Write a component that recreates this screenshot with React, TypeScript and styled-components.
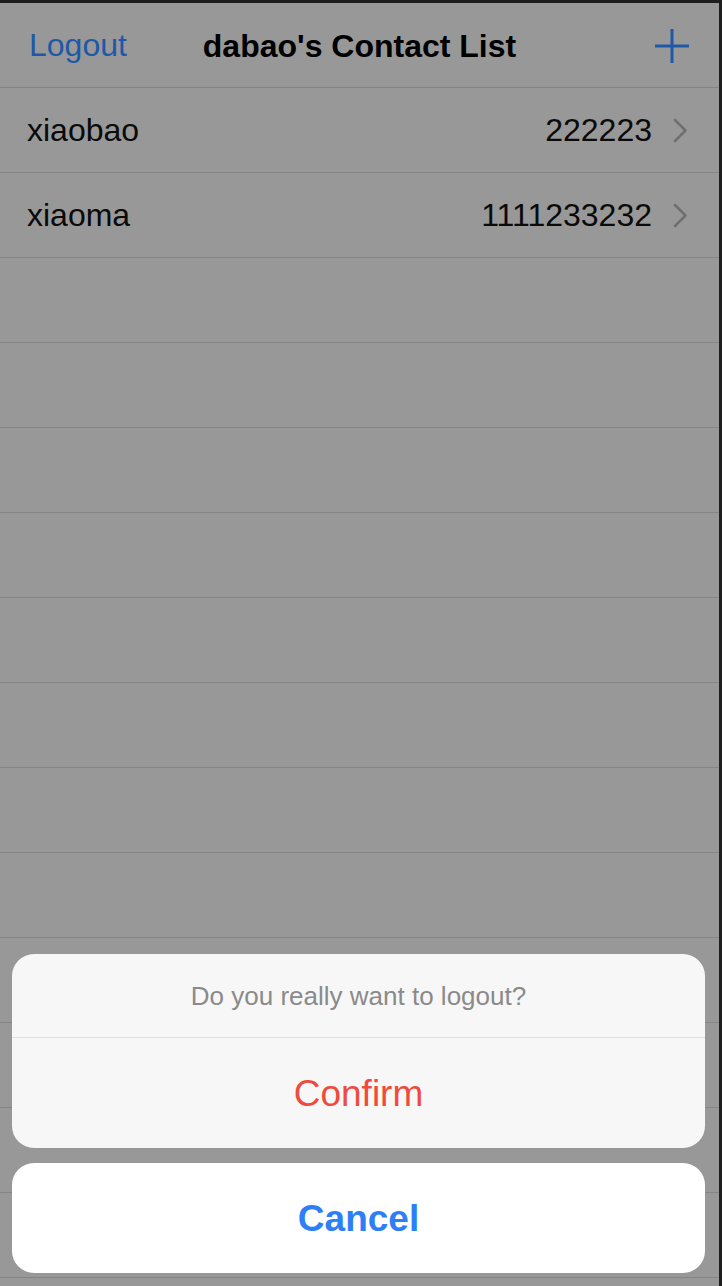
import React from "react";
import styled, { createGlobalStyle } from "styled-components";

const GlobalStyle = createGlobalStyle`
  html, body { margin: 0; padding: 0; background: #1e1e1e; }
  * { box-sizing: border-box; }
`;

const FONT = `"Liberation Sans", Arial, Helvetica, sans-serif`;

const Screen = styled.div`
  width: 722px;
  height: 1286px;
  background: #1e1e1e;
  padding: 3px 3px 0 0;
  font-family: ${FONT};
`;

const Content = styled.div`
  position: relative;
  height: 100%;
  background: #989898;
  overflow: hidden;
`;

const NavBar = styled.header`
  height: 85px;
  border-bottom: 1px solid #848484;
  display: grid;
  grid-template-columns: 1fr auto 1fr;
  align-items: center;
`;

const NavButton = styled.div`
  padding-left: 29px;
  font-size: 32px;
  color: #1e58a8;
  margin-top: 1px;
`;

const Title = styled.h1`
  margin: 0;
  font-size: 32px;
  font-weight: 700;
  color: #000;
  margin-top: 2px;
`;

const AddButton = styled.div`
  justify-self: end;
  padding-right: 30px;
  display: flex;
  align-items: center;
  height: 34px;
  margin-top: 1px;
`;

const Row = styled.div`
  height: 85px;
  border-bottom: 1px solid #858585;
  display: flex;
  align-items: center;
  padding: 0 31px 0 27px;
  font-size: 32px;
  color: #0a0a0a;
`;

const Name = styled.span`
  flex: 1;
`;

const Phone = styled.span`
  margin-right: 21px;
`;

const Sheet = styled.div`
  position: absolute;
  left: 12px;
  right: 14px;
  bottom: 13px;
  display: flex;
  flex-direction: column;
  gap: 15px;
`;

const Group = styled.div<{ $bg: string }>`
  background: ${(p) => p.$bg};
  border-radius: 22px;
  overflow: hidden;
`;

const Message = styled.div`
  height: 84px;
  border-bottom: 1px solid #e1e1e1;
  display: flex;
  align-items: center;
  justify-content: center;
  font-size: 26px;
  color: #8a8a8a;
  padding-top: 2px;
`;

const SheetButton = styled.div<{ $color: string; $bold?: boolean }>`
  height: 110px;
  display: flex;
  align-items: center;
  justify-content: center;
  font-size: 37px;
  color: ${(p) => p.$color};
  font-weight: ${(p) => (p.$bold ? 700 : 400)};
  padding-top: 2px;
`;

const contacts = [
  { name: "xiaobao", phone: "222223" },
  { name: "xiaoma", phone: "1111233232" },
];

const Chevron = () => (
  <svg width="15" height="25" viewBox="0 0 15 25" fill="none">
    <path d="M2 2 L12.5 12.5 L2 23" stroke="#6f6f6f" strokeWidth="2.6" strokeLinecap="round" strokeLinejoin="round" />
  </svg>
);

const Plus = () => (
  <svg width="34" height="34" viewBox="0 0 34 34" fill="none">
    <path d="M17 0 V34 M0 17 H34" stroke="#1e58a8" strokeWidth="3" />
  </svg>
);

export default function App() {
  const empty = Array.from({ length: 12 });
  return (
    <>
      <GlobalStyle />
      <Screen>
        <Content>
          <NavBar>
            <NavButton>Logout</NavButton>
            <Title>dabao's Contact List</Title>
            <AddButton>
              <Plus />
            </AddButton>
          </NavBar>
          {contacts.map((c) => (
            <Row key={c.name}>
              <Name>{c.name}</Name>
              <Phone>{c.phone}</Phone>
              <Chevron />
            </Row>
          ))}
          {empty.map((_, i) => (
            <Row key={i} />
          ))}
          <Sheet>
            <Group $bg="#f7f7f7">
              <Message>Do you really want to logout?</Message>
              <SheetButton $color="#ef4a3c">Confirm</SheetButton>
            </Group>
            <Group $bg="#ffffff">
              <SheetButton $color="#2d7ff5" $bold>
                Cancel
              </SheetButton>
            </Group>
          </Sheet>
        </Content>
      </Screen>
    </>
  );
}
